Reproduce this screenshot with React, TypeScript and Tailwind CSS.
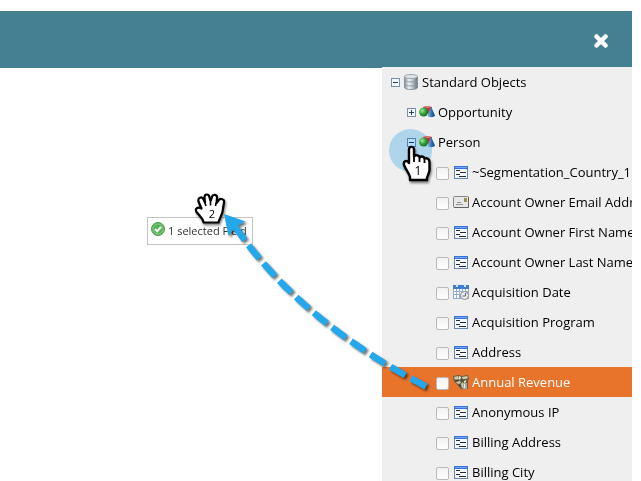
import React from "react";

type FieldKind = "text" | "email" | "date" | "currency";

const fields: { name: string; kind: FieldKind; selected?: boolean }[] = [
  { name: "~Segmentation_Country_1", kind: "text" },
  { name: "Account Owner Email Addr", kind: "email" },
  { name: "Account Owner First Name", kind: "text" },
  { name: "Account Owner Last Name", kind: "text" },
  { name: "Acquisition Date", kind: "date" },
  { name: "Acquisition Program", kind: "text" },
  { name: "Address", kind: "text" },
  { name: "Annual Revenue", kind: "currency", selected: true },
  { name: "Anonymous IP", kind: "text" },
  { name: "Billing Address", kind: "text" },
  { name: "Billing City", kind: "text" },
];

function DatabaseIcon() {
  return (
    <svg width="16" height="16" viewBox="0 0 16 16" className="shrink-0" aria-hidden="true">
      <defs>
        <linearGradient id="db" x1="0" x2="1">
          <stop offset="0" stopColor="#84909a" />
          <stop offset="0.35" stopColor="#f4f7f9" />
          <stop offset="0.65" stopColor="#b4bfc6" />
          <stop offset="1" stopColor="#5f6a72" />
        </linearGradient>
      </defs>
      <path d="M1.500 2.500v11c0 1.200 2.800 2 6.500 2s6.500-.8 6.500-2v-11z" fill="url(#db)" stroke="#87939b" />
      <ellipse cx="8" cy="2.500" rx="6.500" ry="2" fill="#dfe5e9" stroke="#9aa5ac" />
      <path d="M1.500 6c0 1.200 2.800 1.900 6.500 1.900s6.500-.7 6.500-1.900M1.500 10c0 1.200 2.800 1.900 6.500 1.900s6.500-.7 6.500-1.900" fill="none" stroke="#8c979f" />
    </svg>
  );
}

function ShapesIcon() {
  return (
    <svg width="16" height="16" viewBox="0 0 16 16" className="shrink-0" aria-hidden="true">
      <defs>
        <radialGradient id="ball" cx="0.35" cy="0.35" r="0.7">
          <stop offset="0" stopColor="#a5eb98" />
          <stop offset="0.5" stopColor="#35a83a" />
          <stop offset="1" stopColor="#146b20" />
        </radialGradient>
        <linearGradient id="cone" x1="0" x2="1">
          <stop offset="0" stopColor="#8ac1e8" />
          <stop offset="0.6" stopColor="#246bab" />
          <stop offset="1" stopColor="#123e75" />
        </linearGradient>
      </defs>
      <path d="M4 3l4-1 5 1-3 8z" fill="#c92d35" />
      <path d="M5 3l3-.6 3.500.7-3 1z" fill="#ef9298" />
      <path d="M12 2.500l4 9c-1 2-6 2.200-7.500.5z" fill="url(#cone)" />
      <circle cx="4.600" cy="8" r="4.500" fill="url(#ball)" />
    </svg>
  );
}

function FieldIcon({ kind }: { kind: FieldKind }) {
  if (kind === "email") {
    return (
      <svg width="16" height="16" viewBox="0 0 16 16" className="shrink-0" aria-hidden="true">
        <rect x="0.500" y="2.500" width="15" height="11" rx="1" fill="#e7e7e5" stroke="#858585" />
        <path d="M1 13.500h14.500V3" fill="none" stroke="#626262" />
        <path d="M4 8.500h4M3 10.500h7" stroke="#929292" />
        <path d="M11 4h3v4h-3z" fill="#9b9148" />
      </svg>
    );
  }
  if (kind === "date") {
    return (
      <svg width="16" height="16" viewBox="0 0 16 16" className="shrink-0" aria-hidden="true">
        <path d="M0 1h16v14H0z" fill="#91abd4" />
        <path d="M0 1h16v4H0z" fill="#427bd5" />
        <path d="M3 0h2v3H3zM11 0h2v3h-2z" fill="#d5e5fa" />
        <path d="M1 5h2v2H1zM4 5h2v2H4zM7 5h2v2H7zM10 5h2v2h-2zM13 5h2v2h-2zM1 8h2v2H1zM4 8h2v2H4zM7 8h2v2H7zM1 11h2v3H1zM4 11h2v3H4z" fill="#fff" />
        <circle cx="11.500" cy="11.500" r="4" fill="#ececec" stroke="#8b8f92" />
        <path d="M12.500 9v3h-3" fill="none" stroke="#666" />
      </svg>
    );
  }
  if (kind === "currency") {
    return (
      <svg width="16" height="16" viewBox="0 0 16 16" className="shrink-0" aria-hidden="true">
        <path d="M0 2l6-1 3 1 6-1 1 4-1 2v8H8l-2-2-3-4-2-1z" fill="#665e48" />
        <path d="M1 3l4-1 1 3-4 1zM9 3l5-1 1 2-5 2zM3 8l4-1 1 2-3 1zM8 10l2-2v6H9z" fill="#c9cba4" />
        <path d="M6 2l2 1-1 3-1-1zM11 7l2-1v2l-2 1z" fill="#f0eddb" />
        <path d="M2 6l3 1M8 6h4M6 11l2 1" stroke="#34372b" />
        <path d="M10 9h4v6h-4z" fill="#a8aaa0" />
        <path d="M11 10h1v4h-1z" fill="#eee" />
      </svg>
    );
  }
  return (
    <svg width="16" height="16" viewBox="0 0 16 16" className="shrink-0" aria-hidden="true">
      <path d="M1 2h14v13H1z" fill="#6685bb" />
      <path d="M1 2h14v3H1z" fill="#3a72d8" />
      <path d="M2 3h12v1H2z" fill="#73a4f2" />
      <path d="M2 5h12v9H2z" fill="#f5f8fd" />
      <path d="M3 6.500h4M7 8.500h6M3 10.500h4M6 12.500h7" stroke="#262b34" />
    </svg>
  );
}

function Toggle({ open, label }: { open: boolean; label: string }) {
  return (
    <button type="button" aria-label={label} aria-expanded={open} className="shrink-0">
      <svg width="9" height="9" viewBox="0 0 9 9" className="mt-px block" aria-hidden="true">
        <rect x="0.500" y="0.500" width="8" height="8" fill="#f7fafd" stroke="#7790ad" />
        <path d={open ? "M2 4.500h5" : "M2 4.500h5M4.500 2v5"} stroke="#223f66" />
      </svg>
    </button>
  );
}

function StepHighlight() {
  return (
    <div className="pointer-events-none absolute top-[62px] left-[7px] size-[43px] rounded-full bg-[#bbe4fb] mix-blend-multiply" />
  );
}

function PointerHand() {
  return (
    <svg width="40" height="44" viewBox="398 142 40 44" className="pointer-events-none absolute top-[75px] left-4">
      <path
        d="M409 163V149.500c0-3.500 5-3.500 5 0v7c1-2 5-1.500 5.500.8 1.500-1.500 4.500-1 5 1.200 2.500-1 5 .5 5 3.500v8c0 3-2 5-2.500 8v2h-17V177c-1-4-4-7-6-12-1-4 3-5.500 5-2z"
        fill="#fff"
        stroke="#000"
        strokeWidth="2.400"
        strokeLinejoin="round"
        className="drop-shadow-[1px_2px_1px_#0007]"
      />
      <path d="M414 156v6M419.500 158v4M424.500 159v4" stroke="#000" strokeWidth="1.800" />
      <text x="418" y="175" textAnchor="middle" className="font-['Open_Sans',sans-serif] text-[12px]">1</text>
    </svg>
  );
}

function DragTrail() {
  return (
    <svg width="460" height="414" viewBox="0 67 460 414" className="pointer-events-none absolute top-0 right-[-78px]">
      <path
        d="M203.500 221.500c0-2.500-2-4.500-4-7l-3-3.500c-2-4 2-5.500 5-3.500l-3-7c-1-4 3.500-5.500 5-2l1.500 3-.5-5c0-4 4.500-4 5 0l1 3.500 1.500-4c1-3.500 5.500-2.500 5 1l-.5 5 2-2.500c2-3 6.500-1 5.500 2l-1 6c0 6-3.500 9-4.500 14z"
        fill="#fff"
        stroke="#000"
        strokeWidth="2.200"
        strokeLinejoin="round"
        className="drop-shadow-[1px_2px_1px_#0007]"
      />
      <path d="M205 202l1 3M210.500 201v3.500M216 202l-.5 3" stroke="#000" strokeWidth="1.600" />
      <text x="212" y="217" textAnchor="middle" className="font-['Open_Sans',sans-serif] text-[11px]">2</text>
      <g className="drop-shadow-[2px_2px_1px_#0008]">
        <path d="M426 385.500Q300 320 236 227" fill="none" stroke="#23a8ec" strokeWidth="6.500" strokeDasharray="17 6.500" />
        <path d="M224 213L245.500 220.500L238 224.500L240 231L234 228L228.500 235z" fill="#23a8ec" />
      </g>
    </svg>
  );
}

export default function App() {
  return (
    <div className="h-screen overflow-hidden bg-white pt-[11px] pr-[9px] font-['Open_Sans',sans-serif] text-[13px] leading-5 text-black">
      <div className="flex h-full flex-col overflow-hidden">
        <header className="flex h-14 shrink-0 items-center justify-end bg-[#458092] px-6">
          <button type="button" aria-label="Close" className="mt-1">
            <svg width="14" height="14" viewBox="0 0 14 14" className="block" aria-hidden="true">
              <path d="M2.500 2.500l9 9M11.500 2.500l-9 9" stroke="#fff" strokeWidth="4.500" strokeLinecap="round" />
            </svg>
          </button>
        </header>
        <div className="flex min-h-0 grow">
          <main className="relative z-10 grow border-t border-[#458092] bg-white">
            <div className="absolute top-[149px] right-[129px] flex h-[28px] w-[106px] items-center gap-[3px] border border-[#c4c4c4] bg-white pl-[3px] text-[11px] whitespace-nowrap text-[#333]">
              <svg width="14" height="14" viewBox="0 0 14 14" className="mb-1 shrink-0" aria-hidden="true">
                <circle cx="7" cy="7" r="6.500" fill="#55b155" stroke="#4f9f52" />
                <circle cx="7" cy="7" r="5" fill="none" stroke="#8ccb86" />
                <path d="M4 7l2.200 2.300L10 5" fill="none" stroke="#fff" strokeWidth="2" />
              </svg>
              1 selected Field
            </div>
            <DragTrail />
          </main>
          <aside className="relative w-[250px] shrink-0 overflow-hidden bg-[#efefef] whitespace-nowrap">
            <div className="flex h-[30px] items-center gap-[3px] pl-[9px]">
              <Toggle open label="Collapse Standard Objects" />
              <DatabaseIcon />
              Standard Objects
            </div>
            <div className="flex h-[30px] items-center gap-[3px] pl-[25px]">
              <Toggle open={false} label="Expand Opportunity" />
              <ShapesIcon />
              Opportunity
            </div>
            <div className="flex h-[30px] items-center gap-[3px] pl-[25px]">
              <Toggle open label="Collapse Person" />
              <StepHighlight />
              <div className="relative">
                <ShapesIcon />
              </div>
              Person
            </div>
            <ul>
              {fields.map((field) => (
                <li key={field.name}>
                  <label
                    className={
                      field.selected
                        ? "flex h-[30px] items-center bg-[#e8742c] pl-[54px] font-medium text-white"
                        : "flex h-[30px] items-center pl-[54px]"
                    }
                  >
                    <input
                      type="checkbox"
                      className="mt-[3px] mr-1 size-[13px] shrink-0 appearance-none rounded-[2px] border border-[#b9b9b9] bg-linear-to-b from-[#f2f2f2] to-white"
                    />
                    <FieldIcon kind={field.kind} />
                    <span className="ml-[3px]">{field.name}</span>
                  </label>
                </li>
              ))}
            </ul>
            <PointerHand />
          </aside>
        </div>
      </div>
    </div>
  );
}
